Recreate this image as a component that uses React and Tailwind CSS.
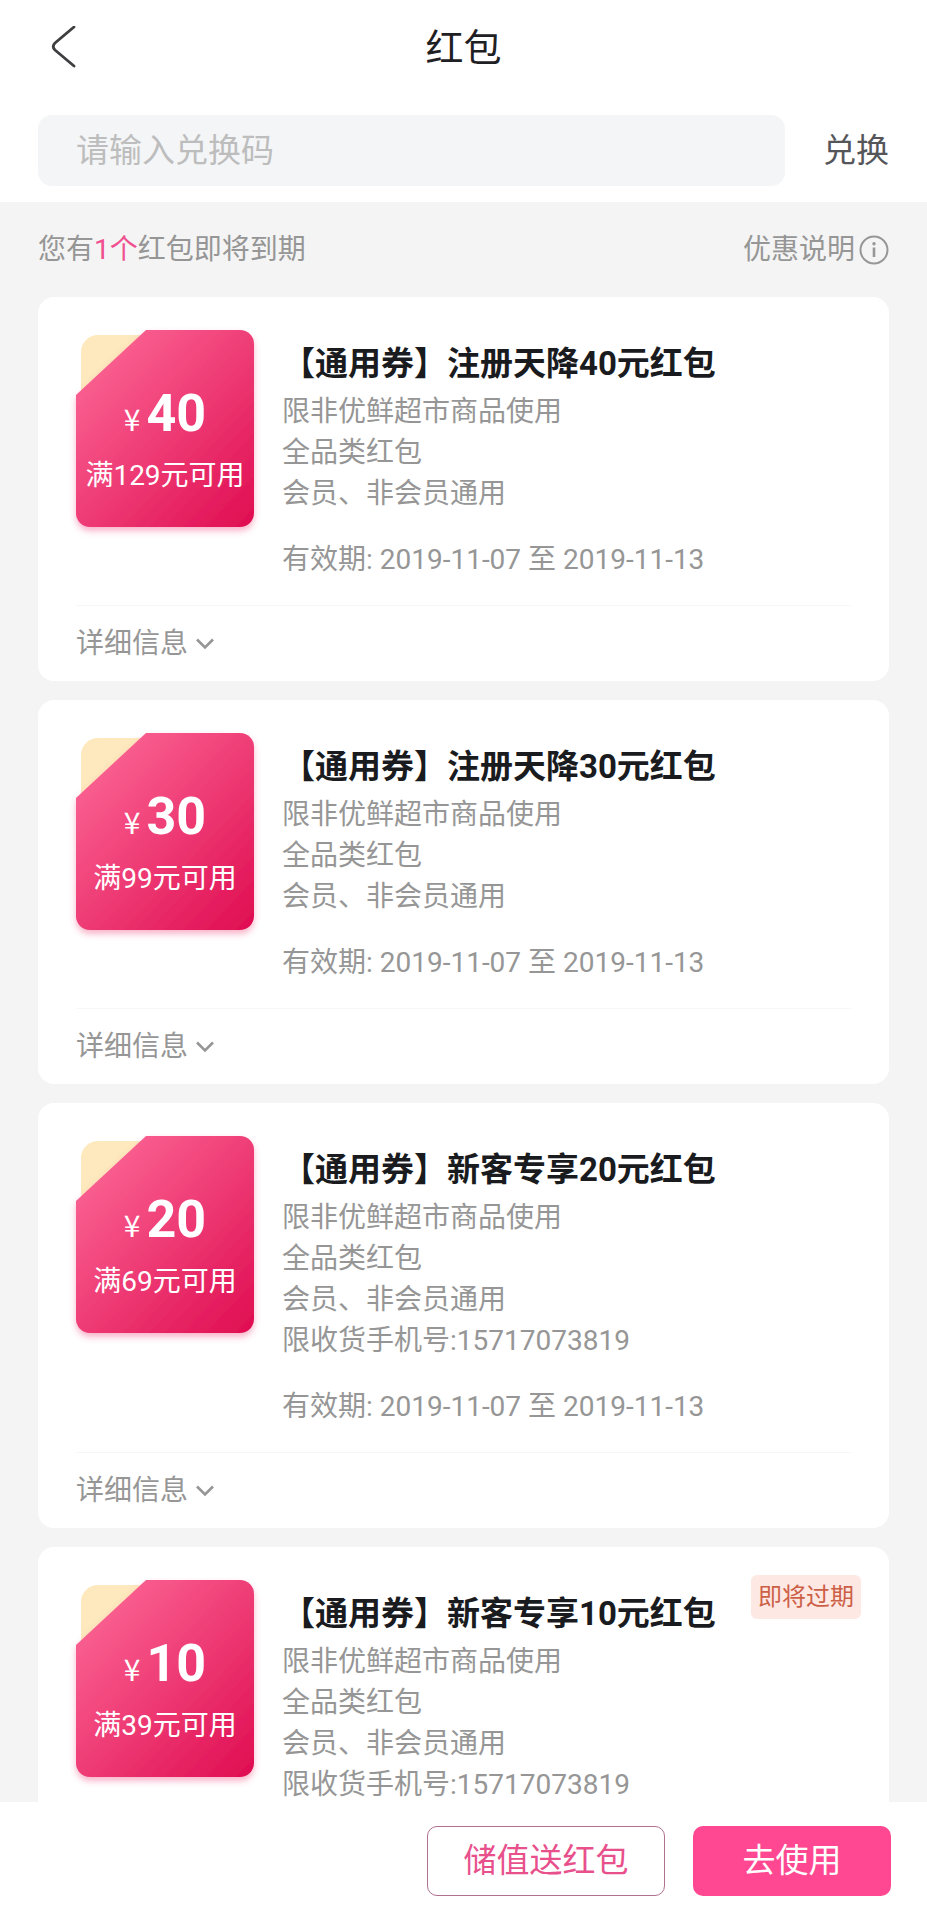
import React, { useState } from 'react';

const initialCoupons = [
  {
    id: 1,
    amount: 40,
    threshold: 129,
    title: '【通用券】注册天降40元红包',
    rules: ['限非优鲜超市商品使用', '全品类红包', '会员、非会员通用'],
  },
  {
    id: 2,
    amount: 30,
    threshold: 99,
    title: '【通用券】注册天降30元红包',
    rules: ['限非优鲜超市商品使用', '全品类红包', '会员、非会员通用'],
  },
  {
    id: 3,
    amount: 20,
    threshold: 69,
    title: '【通用券】新客专享20元红包',
    rules: ['限非优鲜超市商品使用', '全品类红包', '会员、非会员通用', '限收货手机号:15717073819'],
  },
  {
    id: 4,
    amount: 10,
    threshold: 39,
    title: '【通用券】新客专享10元红包',
    rules: ['限非优鲜超市商品使用', '全品类红包', '会员、非会员通用', '限收货手机号:15717073819'],
    expiring: true,
  },
];

// Folded red ticket with the cream paper peeking out behind the corner
function TicketShape() {
  return (
    <svg viewBox="0 0 178 197" className="absolute inset-0 h-full w-full overflow-visible" aria-hidden="true">
      <defs>
        <linearGradient id="ticket" x1="0.1" y1="0.1" x2="0.95" y2="1">
          <stop offset="0" stopColor="#fb6494" />
          <stop offset="1" stopColor="#e00f53" />
        </linearGradient>
        <filter id="ticketShadow" x="-10%" y="-10%" width="120%" height="125%">
          <feDropShadow dx="0" dy="4" stdDeviation="3" floodColor="#f0437a" floodOpacity="0.4" />
        </filter>
      </defs>
      <path d="M5 70V22A17 17 0 0 1 22 5H72Z" fill="#fde9bd" />
      <path
        d="M70 0H164A14 14 0 0 1 178 14V183A14 14 0 0 1 164 197H14A14 14 0 0 1 0 183V65Z"
        fill="url(#ticket)"
        filter="url(#ticketShadow)"
      />
    </svg>
  );
}

function Coupon({ coupon }) {
  const [open, setOpen] = useState(false);

  return (
    <li className="relative rounded-2xl bg-white px-[38px]">
      {coupon.expiring && (
        <span className="absolute right-7 top-7 rounded-md bg-[#fee8e3] px-[7px] text-2xl leading-[44px] text-[#cc6047]">
          即将过期
        </span>
      )}

      <div className="flex gap-7 border-b border-[#f7f7f7] pb-[25px]">
        <div className="relative mt-[33px] flex h-[197px] w-[178px] shrink-0 flex-col items-center pt-[54px] text-white">
          <TicketShape />
          <p className="relative flex items-baseline gap-[6px] leading-[60px]">
            <span className="font-['Noto_Sans_CJK_SC',sans-serif] text-[30px] leading-none">¥</span>
            <strong className="text-[52px] font-bold">{coupon.amount}</strong>
          </p>
          <p className="relative mt-[11px] whitespace-nowrap text-[28px] leading-[41px]">
            满{coupon.threshold}元可用
          </p>
        </div>

        <div className="min-w-0 flex-1 pt-10 text-[28px] leading-[41px] text-[#969696]">
          <h2 className="text-[33px] font-bold leading-[54px] text-[#1a1b1e]">{coupon.title}</h2>
          {coupon.rules.map((rule) => (
            <p key={rule}>{rule}</p>
          ))}
          <p className="mt-[25px]">有效期: 2019-11-07 至 2019-11-13</p>
        </div>
      </div>

      <button
        type="button"
        aria-expanded={open}
        onClick={() => setOpen(!open)}
        className="flex h-[75px] items-center gap-2 text-[28px] text-[#969696]"
      >
        详细信息
        <svg viewBox="0 0 18 12" className="h-3 w-[18px]" fill="none" stroke="currentColor" strokeWidth="2.6">
          <path d="M1 1.5L9 9.5L17 1.5" />
        </svg>
      </button>
    </li>
  );
}

export default function App() {
  const [code, setCode] = useState('');

  return (
    <div className="flex h-screen flex-col bg-[#f4f4f4] font-['Roboto','Noto_Sans_CJK_SC',sans-serif]">
      <header className="shrink-0 bg-white px-[38px] pb-4">
        <div className="grid h-24 grid-cols-3 items-center">
          <button type="button" aria-label="返回" className="w-fit pl-3">
            <svg
              viewBox="0 0 26 44"
              className="h-11 w-[26px]"
              fill="none"
              stroke="#3f3f42"
              strokeWidth="2.8"
              strokeLinecap="round"
            >
              <path d="M24 1L5 17Q1.5 20.5 5 24L24 40" />
            </svg>
          </button>
          <h1 className="text-center text-[38px] text-[#1f2023]">红包</h1>
        </div>
        <form className="mt-[19px] flex items-center gap-[38px]" onSubmit={(e) => e.preventDefault()}>
          <input
            type="text"
            aria-label="兑换码"
            placeholder="请输入兑换码"
            value={code}
            onChange={(e) => setCode(e.target.value)}
            className="h-[71px] min-w-0 flex-1 rounded-[14px] bg-[#f4f5f7] px-[38px] text-[33px] text-[#1a1b1e] outline-none placeholder:text-[#bdbdbd]"
          />
          <button type="submit" className="text-[33px] text-[#55565a]">
            兑换
          </button>
        </form>
      </header>

      <main className="min-h-0 flex-1 overflow-y-auto px-[38px] pb-5 [scrollbar-width:none]">
        <div className="flex h-[95px] items-center justify-between text-[28px] text-[#969696]">
          <p>
            您有<span className="text-[#f0508f]">1个</span>红包即将到期
          </p>
          <a href="#rules" className="flex items-center gap-1">
            优惠说明
            <svg viewBox="0 0 30 30" className="h-[30px] w-[30px]" fill="none" stroke="currentColor" strokeWidth="2">
              <circle cx="15" cy="15" r="13.5" />
              <path d="M15 12.5V22" strokeWidth="2.6" />
              <circle cx="15" cy="8.8" r="1.7" fill="currentColor" stroke="none" />
            </svg>
          </a>
        </div>

        <ul className="flex flex-col gap-[19px]">
          {initialCoupons.map((coupon) => (
            <Coupon key={coupon.id} coupon={coupon} />
          ))}
        </ul>
      </main>

      <footer className="flex shrink-0 justify-end gap-7 bg-white px-9 py-6 text-[33px]">
        <button type="button" className="h-[70px] w-[238px] rounded-[10px] border border-[#b0708f] text-[#e8508c]">
          储值送红包
        </button>
        <button type="button" className="h-[70px] w-[198px] rounded-[10px] bg-[#ff4891] text-white">
          去使用
        </button>
      </footer>
    </div>
  );
}
